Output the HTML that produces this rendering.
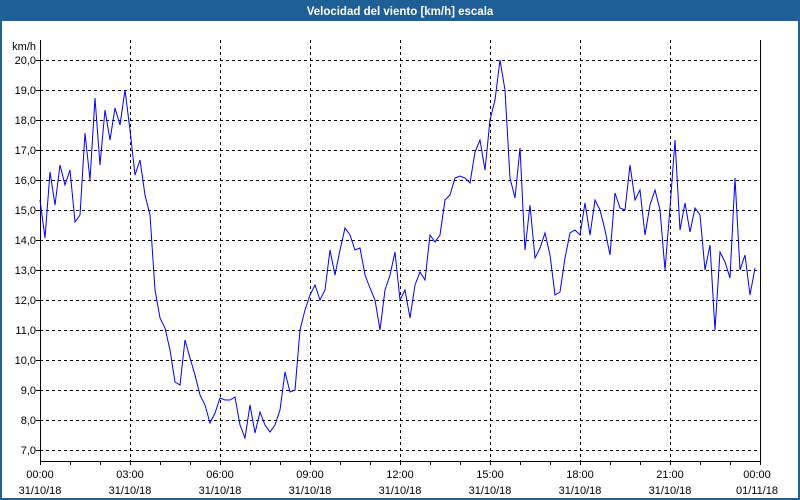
<!DOCTYPE html>
<html><head><style>
html,body{margin:0;padding:0;background:#fff}
body{width:800px;height:500px;overflow:hidden;position:relative;font-family:"Liberation Sans",sans-serif}
</style></head><body>
<svg width="800" height="500" xmlns="http://www.w3.org/2000/svg" style="position:absolute;left:0;top:0" font-family="Liberation Sans, sans-serif">
<rect x="0" y="0" width="800" height="500" fill="#1e5f96"/>
<rect x="2" y="21" width="796" height="477" fill="#fff"/>
<text x="400" y="15" fill="#fff" font-size="11.5" font-weight="bold" text-anchor="middle">Velocidad del viento [km/h] escala</text>
<g stroke="#000" stroke-width="1" stroke-dasharray="3,3" shape-rendering="crispEdges">
<line x1="40" y1="60.5" x2="760" y2="60.5"/><line x1="40" y1="90.5" x2="760" y2="90.5"/><line x1="40" y1="120.5" x2="760" y2="120.5"/><line x1="40" y1="150.5" x2="760" y2="150.5"/><line x1="40" y1="180.5" x2="760" y2="180.5"/><line x1="40" y1="210.5" x2="760" y2="210.5"/><line x1="40" y1="240.5" x2="760" y2="240.5"/><line x1="40" y1="270.5" x2="760" y2="270.5"/><line x1="40" y1="300.5" x2="760" y2="300.5"/><line x1="40" y1="330.5" x2="760" y2="330.5"/><line x1="40" y1="360.5" x2="760" y2="360.5"/><line x1="40" y1="390.5" x2="760" y2="390.5"/><line x1="40" y1="420.5" x2="760" y2="420.5"/><line x1="40" y1="450.5" x2="760" y2="450.5"/>
<line x1="130.5" y1="40" x2="130.5" y2="461"/><line x1="220.5" y1="40" x2="220.5" y2="461"/><line x1="310.5" y1="40" x2="310.5" y2="461"/><line x1="400.5" y1="40" x2="400.5" y2="461"/><line x1="490.5" y1="40" x2="490.5" y2="461"/><line x1="580.5" y1="40" x2="580.5" y2="461"/><line x1="670.5" y1="40" x2="670.5" y2="461"/>
</g>
<g stroke="#000" stroke-width="1" shape-rendering="crispEdges" fill="none">
<path d="M40.5 40V461.5H760.5V40"/>
<path d="M40.5 461v4M70.5 461v4M100.5 461v4M130.5 461v4M160.5 461v4M190.5 461v4M220.5 461v4M250.5 461v4M280.5 461v4M310.5 461v4M340.5 461v4M370.5 461v4M400.5 461v4M430.5 461v4M460.5 461v4M490.5 461v4M520.5 461v4M550.5 461v4M580.5 461v4M610.5 461v4M640.5 461v4M670.5 461v4M700.5 461v4M730.5 461v4M760.5 461v4"/>
<path d="M36 60.5h4M36 90.5h4M36 120.5h4M36 150.5h4M36 180.5h4M36 210.5h4M36 240.5h4M36 270.5h4M36 300.5h4M36 330.5h4M36 360.5h4M36 390.5h4M36 420.5h4M36 450.5h4"/>
</g>
<polyline fill="none" stroke="#0000ff" stroke-width="1" points="40,200 45,238 50,172 55,205 60,165 65,185 70,170 75,222 80,215 85,133 90,180 95,98 100,165 105,110 110,140 115,108 120,125 125,90 130,130 135,175 140,160 145,195 150,215 155,290 160,318 165,328 170,350 175,382 180,385 185,340 190,358 195,375 200,395 205,405 210,423 215,413 220,398 225,400 230,400 235,397 240,425 245,438 250,405 255,433 260,412 265,425 270,432 275,425 280,410 285,372 290,392 295,390 300,330 305,310 310,295 315,285 320,300 325,290 330,250 335,275 340,250 345,228 350,235 355,250 360,248 365,275 370,288 375,300 380,330 385,290 390,275 395,252 400,300 405,290 410,318 415,285 420,272 425,280 430,235 435,242 440,235 445,200 450,195 455,178 460,176 465,178 470,183 475,152 480,140 485,170 490,120 495,100 500,60 505,90 510,178 515,198 520,148 525,250 530,205 535,258 540,248 545,233 550,255 555,295 560,292 565,258 570,233 575,230 580,235 585,203 590,235 595,200 600,210 605,230 610,255 615,193 620,208 625,210 630,165 635,200 640,190 645,235 650,205 655,190 660,210 665,270 670,208 675,140 680,230 685,203 690,232 695,208 700,215 705,270 710,245 715,330 720,252 725,262 730,278 735,178 740,270 745,255 750,295 755,268"/>
<g font-size="11" fill="#000" text-anchor="end">
<text x="36" y="50">km/h</text>
<text x="36" y="64">20,0</text><text x="36" y="94">19,0</text><text x="36" y="124">18,0</text><text x="36" y="154">17,0</text><text x="36" y="184">16,0</text><text x="36" y="214">15,0</text><text x="36" y="244">14,0</text><text x="36" y="274">13,0</text><text x="36" y="304">12,0</text><text x="36" y="334">11,0</text><text x="36" y="364">10,0</text><text x="36" y="394">9,0</text><text x="36" y="424">8,0</text><text x="36" y="454">7,0</text>
</g>
<g font-size="11" fill="#000" text-anchor="middle">
<text x="40" y="478">00:00</text><text x="130" y="478">03:00</text><text x="220" y="478">06:00</text><text x="310" y="478">09:00</text><text x="400" y="478">12:00</text><text x="490" y="478">15:00</text><text x="580" y="478">18:00</text><text x="670" y="478">21:00</text><text x="757" y="478">00:00</text>
<text x="40" y="494">31/10/18</text><text x="130" y="494">31/10/18</text><text x="220" y="494">31/10/18</text><text x="310" y="494">31/10/18</text><text x="400" y="494">31/10/18</text><text x="490" y="494">31/10/18</text><text x="580" y="494">31/10/18</text><text x="670" y="494">31/10/18</text><text x="757" y="494">01/11/18</text>
</g>
</svg>
</body></html>
